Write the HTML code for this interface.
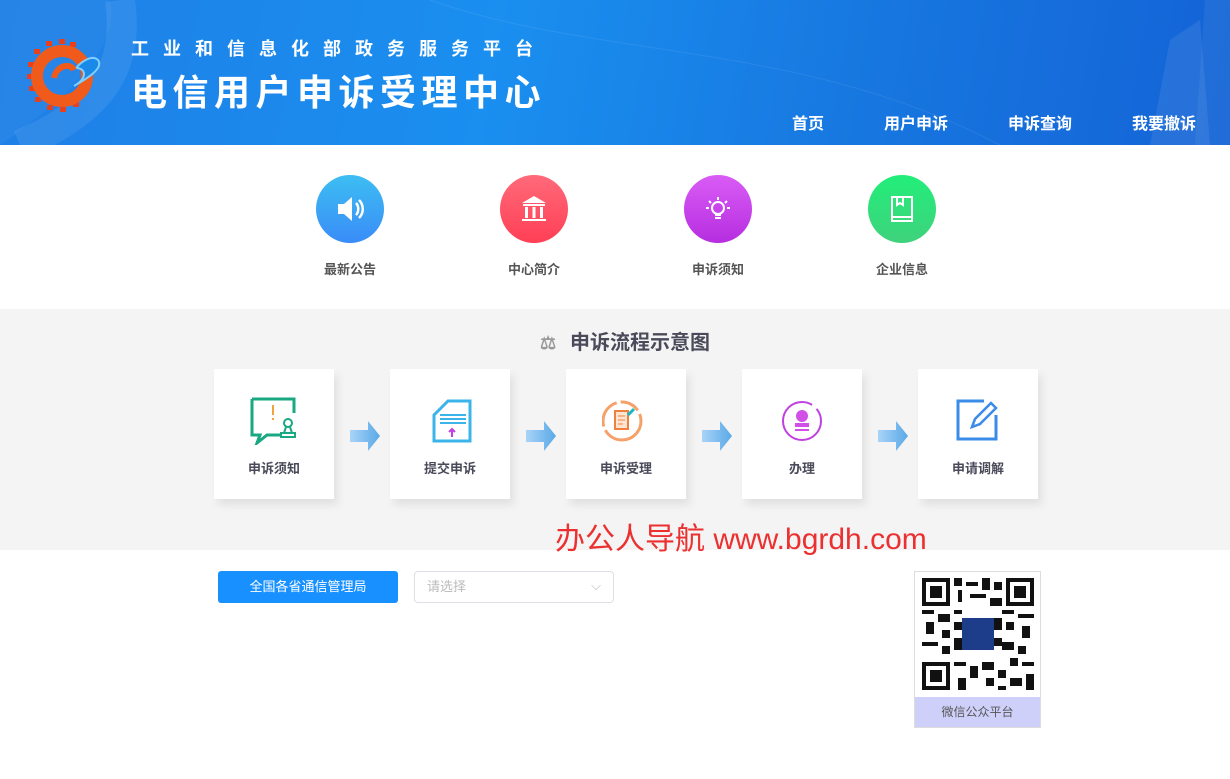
<!DOCTYPE html>
<html><head><meta charset="utf-8"><style>
*{margin:0;padding:0;box-sizing:border-box}
body{width:1230px;height:779px;background:#fff;font-family:"Liberation Sans","Noto Sans CJK SC",sans-serif;position:relative;overflow:hidden}
.hd{position:absolute;left:0;top:0;width:1230px;height:145px;background:linear-gradient(100deg,#1f7fe6 0%,#1a8ff0 40%,#1777e0 70%,#1463d6 100%);overflow:hidden}
.t1{position:absolute;left:131px;top:35px;color:#fff;font-size:18px;letter-spacing:14px;font-weight:bold;white-space:nowrap}
.t2{position:absolute;left:131px;top:64px;color:#fff;font-size:36px;letter-spacing:5.5px;font-weight:bold;white-space:nowrap}
.nav{position:absolute;top:110px;color:#fff;font-size:16px;font-weight:bold}
.ic{position:absolute;width:68px;height:68px;border-radius:50%;top:175px}
.lb{position:absolute;top:259px;font-size:13px;font-weight:bold;color:#555;width:100px;text-align:center}
.gray{position:absolute;left:0;top:309px;width:1230px;height:241px;background:#f4f4f4}
.card{position:absolute;top:369px;width:120px;height:130px;background:#fff;box-shadow:4px 6px 8px rgba(0,0,0,.08)}
.card svg{position:absolute;left:36px;top:28px}
.card span{position:absolute;top:89px;width:120px;text-align:center;font-size:13px;font-weight:bold;color:#4a4a5a}
.ar{position:absolute;top:421px}
</style></head><body>
<div class="hd">
<svg width="1230" height="145" style="position:absolute;left:0;top:0">
<path d="M0 145 C80 90 120 40 110 0 L0 0Z" fill="rgba(255,255,255,0.04)"/>
<path d="M20 145 C100 110 130 70 120 0" stroke="rgba(255,255,255,0.08)" fill="none" stroke-width="30"/>
<path d="M430 0 C600 60 800 40 1000 145" stroke="rgba(255,255,255,0.08)" fill="none"/>
<path d="M1150 145 L1170 40 L1200 20 L1210 145Z" fill="rgba(255,255,255,0.08)"/>
<path d="M1195 145 L1205 0 L1230 0 L1230 145Z" fill="rgba(255,255,255,0.06)"/>
</svg>
<svg width="80" height="76" style="position:absolute;left:26px;top:38px" viewBox="0 0 80 76">
<g fill="#e8401c">
<rect x="20" y="3" width="6" height="5"/><rect x="33" y="1" width="6" height="5"/><rect x="44" y="4" width="6" height="5"/>
<rect x="8" y="11" width="6" height="5"/><rect x="2" y="24" width="6" height="5"/><rect x="1" y="36" width="6" height="5"/>
<rect x="3" y="48" width="6" height="5"/><rect x="9" y="59" width="6" height="5"/><rect x="21" y="67" width="6" height="5"/>
<rect x="34" y="69" width="6" height="5"/><rect x="47" y="64" width="6" height="5"/>
</g>
<circle cx="36" cy="38" r="25" fill="none" stroke="#f05a1a" stroke-width="12"/>
<path d="M48 48 C62 40 78 30 72 22 C66 16 55 24 50 30 C60 30 62 40 48 48Z" fill="#1a8ae8" stroke="#7fd0ff" stroke-width="2"/>
<path d="M28 40 C30 28 44 24 48 32" stroke="#f05a1a" stroke-width="6" fill="none"/>
</svg>
<div class="t1">工业和信息化部政务服务平台</div>
<div class="t2">电信用户申诉受理中心</div>
<div class="nav" style="left:792px">首页</div>
<div class="nav" style="left:884px">用户申诉</div>
<div class="nav" style="left:1008px">申诉查询</div>
<div class="nav" style="left:1132px">我要撤诉</div>
</div>

<div class="ic" style="left:316px;background:linear-gradient(#3dbef2,#3a8cf8)"><svg width="68" height="68"><path d="M22 29h6l8-7v24l-8-7h-6z" fill="#fff"/><path d="M40 28c3 3 3 9 0 12M43 25c5 5 5 13 0 18" stroke="#fff" stroke-width="2.5" fill="none"/></svg></div>
<div class="ic" style="left:500px;background:linear-gradient(#ff6a7a,#ff3f55)"><svg width="68" height="68"><path d="M22 28l12-7 12 7z" fill="#fff"/><rect x="23" y="29" width="22" height="2" fill="#fff"/><rect x="25" y="32" width="3" height="11" fill="#fff"/><rect x="32.5" y="32" width="3" height="11" fill="#fff"/><rect x="40" y="32" width="3" height="11" fill="#fff"/><rect x="22" y="44" width="24" height="2" fill="#fff"/></svg></div>
<div class="ic" style="left:684px;background:linear-gradient(#d95cf5,#b62ee0)"><svg width="68" height="68"><circle cx="34" cy="33" r="6" stroke="#fff" stroke-width="2" fill="none"/><path d="M31 40h6M31 43h6M34 22v3M25 26l2 2M43 26l-2 2M22 33h3M43 33h3" stroke="#fff" stroke-width="2"/></svg></div>
<div class="ic" style="left:868px;background:linear-gradient(#22ee7a,#3fd27c)"><svg width="68" height="68"><rect x="24" y="22" width="20" height="24" stroke="#fff" stroke-width="2" fill="none"/><path d="M24 42h20M29 22v8l3-2 3 2v-8" stroke="#fff" stroke-width="2" fill="none"/></svg></div>
<div class="lb" style="left:300px">最新公告</div>
<div class="lb" style="left:484px">中心简介</div>
<div class="lb" style="left:668px">申诉须知</div>
<div class="lb" style="left:852px">企业信息</div>

<div class="gray"></div>
<div style="position:absolute;left:540px;top:326px;font-size:20px;font-weight:bold;color:#4a4a5a;white-space:nowrap"><span style="color:#999;font-size:18px;display:inline-block;width:30px">⚖</span>申诉流程示意图</div>

<div class="card" style="left:214px"><svg width="50" height="48"><path d="M2 2h42v14M2 2v36h8l-3 8 10-8h14" stroke="#1aa882" stroke-width="3" fill="none"/><path d="M23 8v10M23 21v2" stroke="#f5a040" stroke-width="2"/><circle cx="38" cy="26" r="4" stroke="#1aa882" stroke-width="2" fill="none"/><path d="M36 30l-2 6h8l-2-6M31 36h14v4H31z" stroke="#1aa882" stroke-width="2" fill="none"/></svg><span>申诉须知</span></div>
<div class="card" style="left:390px"><svg width="50" height="48"><path d="M14 12l8-8h22v40H8V18z" stroke="#3bb4ea" stroke-width="3" fill="none"/><path d="M14 18h26M14 22h26M14 26h26" stroke="#3bb4ea" stroke-width="2"/><path d="M26 40v-8M23 35l3-3 3 3" stroke="#c040e0" stroke-width="2" fill="none"/></svg><span>提交申诉</span></div>
<div class="card" style="left:566px"><svg width="50" height="48"><circle cx="20" cy="24" r="19" stroke="#f6a06a" stroke-width="3" fill="none" stroke-dasharray="50 4 30 4 20 4"/><rect x="13" y="14" width="13" height="18" stroke="#f08040" stroke-width="2" fill="#fde5d2"/><path d="M16 19h7M16 23h7M16 27h5" stroke="#f08040"/><path d="M32 12l-6 6" stroke="#16b8c8" stroke-width="3"/></svg><span>申诉受理</span></div>
<div class="card" style="left:742px"><svg width="50" height="48"><circle cx="24" cy="24" r="19" stroke="#c040e0" stroke-width="2" fill="none" stroke-dasharray="100 6"/><circle cx="24" cy="19" r="6" fill="#d050e8"/><rect x="17" y="26" width="14" height="4" fill="#d050e8"/><path d="M17 33h14" stroke="#d050e8" stroke-width="2"/></svg><span>办理</span></div>
<div class="card" style="left:918px"><svg width="50" height="48"><path d="M30 4H4v38h38V18" stroke="#3b8be8" stroke-width="3" fill="none"/><path d="M18 30l3-8 16-16 5 5-16 16z" stroke="#3b8be8" stroke-width="2.5" fill="none"/></svg><span>申请调解</span></div>

<svg class="ar" style="left:350px" width="32" height="30"><defs><linearGradient id="g" x1="0" x2="1"><stop offset="0" stop-color="#a8d4f8"/><stop offset="1" stop-color="#5aa8e6"/></linearGradient></defs><path d="M0 9h18V0l12 15-12 15v-9H0z" fill="url(#g)"/></svg>
<svg class="ar" style="left:526px" width="32" height="30"><path d="M0 9h18V0l12 15-12 15v-9H0z" fill="url(#g)"/></svg>
<svg class="ar" style="left:702px" width="32" height="30"><path d="M0 9h18V0l12 15-12 15v-9H0z" fill="url(#g)"/></svg>
<svg class="ar" style="left:878px" width="32" height="30"><path d="M0 9h18V0l12 15-12 15v-9H0z" fill="url(#g)"/></svg>

<div style="position:absolute;left:555px;top:514px;font-size:30px;color:#ec3030;white-space:nowrap">办公人导航 www.bgrdh.com</div>

<div style="position:absolute;left:218px;top:571px;width:180px;height:32px;background:#1890ff;border-radius:3px;color:#fff;font-size:13px;text-align:center;line-height:32px">全国各省通信管理局</div>
<div style="position:absolute;left:414px;top:571px;width:200px;height:32px;border:1px solid #dcdfe6;border-radius:4px;color:#bbb;font-size:13px;line-height:30px;padding-left:12px">请选择<span style="position:absolute;right:12px;top:-1px;color:#bbb">⌵</span></div>

<div style="position:absolute;left:914px;top:571px;width:127px;height:157px;border:1px solid #ddd;background:#fff">
<svg width="112" height="112" style="position:absolute;left:7px;top:6px" viewBox="0 0 28 28">
<g fill="#111">
<path d="M0 0h7v7H0zM21 0h7v7h-7zM0 21h7v7H0z"/>
</g>
<g fill="#fff"><path d="M1 1h5v5H1zM22 1h5v5h-5zM1 22h5v5H1z"/></g>
<g fill="#111"><path d="M2 2h3v3H2zM23 2h3v3h-3zM2 23h3v3H2z"/>
<path d="M8 0h2v2H8zM11 1h3v1h-3zM15 0h2v3h-2zM18 1h2v2h-2zM9 3h1v3H9zM12 4h4v1h-4zM17 5h3v2h-3zM0 8h3v1H0zM4 9h3v2H4zM8 8h2v1H8zM20 8h3v1h-3zM24 9h4v1h-4zM1 11h2v3H1zM5 13h2v2H5zM21 11h2v2h-2zM25 12h2v3h-2zM0 16h4v1H0zM5 17h2v2H5zM20 16h3v2h-3zM24 17h2v2h-2zM22 20h2v2h-2zM25 21h3v1h-3zM8 21h3v1H8zM12 22h2v3h-2zM15 21h3v2h-3zM19 23h2v2h-2zM9 25h2v3H9zM16 25h2v2h-2zM22 25h3v2h-3zM26 24h2v4h-2zM19 27h2v1h-2zM8 11h2v2H8zM8 15h2v3H8zM18 10h2v3h-2zM18 15h2v2h-2z"/></g>
<rect x="10" y="10" width="8" height="8" fill="#1d3d8a"/>
</svg>
<div style="position:absolute;left:0;bottom:0;width:125px;height:30px;background:#cfd0fa;font-size:12px;color:#555;text-align:center;line-height:30px">微信公众平台</div>
</div>
</body></html>
